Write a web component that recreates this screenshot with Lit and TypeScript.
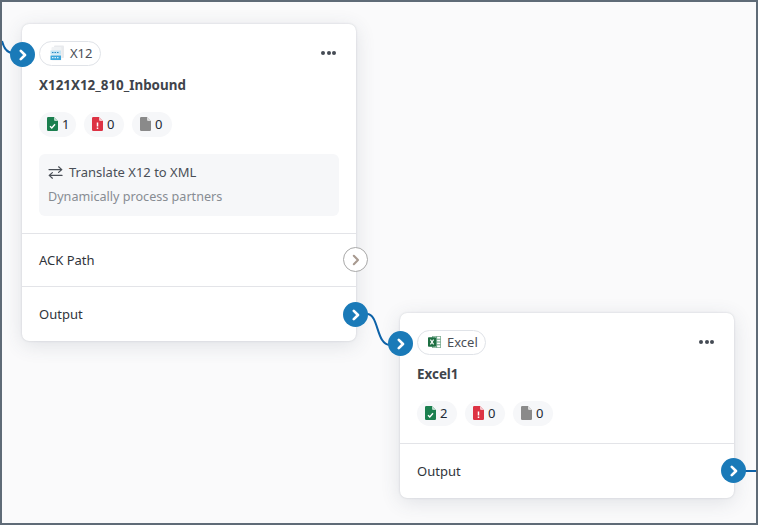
import { LitElement, html, css, svg } from "lit";
import { customElement } from "lit/decorators.js";

const chevron = (color: string, w = 2.6) => svg`<svg class="chev" width="10" height="12" viewBox="0 0 10 12"><path d="M2.8 1.8 7 6 2.8 10.2" fill="none" stroke="${color}" stroke-width="${w}" stroke-linecap="round" stroke-linejoin="round"/></svg>`;

const docIcon = (fill: string, mark: "check" | "bang" | "none") => svg`<svg width="11" height="14" viewBox="0 0 11 14">
  <path d="M1.2 0H7L11 4V12.8A1.2 1.2 0 0 1 9.8 14H1.2A1.2 1.2 0 0 1 0 12.8V1.2A1.2 1.2 0 0 1 1.2 0Z" fill="${fill}"/>
  <path d="M7 0V2.8A1.2 1.2 0 0 0 8.2 4H11Z" fill="#fff" fill-opacity=".7"/>
  ${mark === "check" ? svg`<path d="M3 9.2 4.8 11 8 7.2" fill="none" stroke="#fff" stroke-width="1.4"/>` : ""}
  ${mark === "bang" ? svg`<path d="M5.5 5.4V9.4M5.5 10.4V12" fill="none" stroke="#fff" stroke-width="1.5"/>` : ""}
</svg>`;

const x12Icon = svg`<svg width="14" height="16" viewBox="0 0 14 16">
  <rect x="4" y="0.5" width="10" height="12.5" rx="1" fill="#e8eaed"/>
  <rect x="1.5" y="2" width="10" height="13.5" rx="1" fill="#f0f2f4"/>
  <rect x="0.5" y="5.5" width="10.5" height="4" fill="#c4e4f4"/>
  <rect x="0.5" y="10.5" width="10.5" height="4.5" fill="#3ba6dc"/>
  <path d="M2 7.5h7.5" stroke="#2a8cc4" stroke-width="1" stroke-dasharray="1.5 1"/>
  <path d="M2 12.7h7.5" stroke="#fff" stroke-width="1" stroke-dasharray="1.5 1"/>
</svg>`;

const excelIcon = svg`<svg width="13" height="14" viewBox="0 0 13 14">
  <rect x="4.5" y="1.4" width="8.1" height="11.2" fill="#fff" stroke="#7fae94" stroke-width=".8"/>
  <path d="M8.6 1.4v11.2M4.5 4.2h8.1M4.5 7h8.1M4.5 9.8h8.1" stroke="#5f9c7c" stroke-width="1"/>
  <rect x="0" y="2.2" width="8" height="9.6" rx=".8" fill="#1d6f42"/>
  <path d="M2.4 4.6 5.6 9.4M5.6 4.6 2.4 9.4" stroke="#fff" stroke-width="1.1"/>
</svg>`;

const swapIcon = svg`<svg width="15" height="13" viewBox="0 0 15 13"><path d="M1 3.6H13.6M10.6 .8 13.8 3.6 10.6 6.4M14 9.4H1.4M4.4 6.6 1.2 9.4 4.4 12.2" fill="none" stroke="#4a4f57" stroke-width="1.25" stroke-linecap="round" stroke-linejoin="round"/></svg>`;

@customElement("app-root")
export class AppRoot extends LitElement {
  static styles = css`
    :host {
      display: block;
      width: 758px;
      height: 525px;
      font-family: "Noto Sans", "Open Sans", sans-serif;
    }
    .canvas {
      position: relative;
      box-sizing: border-box;
      width: 758px;
      height: 525px;
      border: 2px solid #5f6b77;
      background: #fafafb;
      overflow: hidden;
    }
    .wires {
      position: absolute;
      left: -2px;
      top: -2px;
    }
    .card {
      position: absolute;
      box-sizing: border-box;
      background: #fff;
      border-radius: 7px;
      box-shadow: 0 0 2px rgba(60, 70, 90, 0.22), 0 4px 20px rgba(60, 70, 90, 0.14);
    }
    .card1 {
      left: 20px;
      top: 22px;
      width: 334px;
      height: 317px;
    }
    .card2 {
      left: 398px;
      top: 311px;
      width: 334px;
      height: 185px;
    }
    .head {
      display: flex;
      align-items: center;
      justify-content: space-between;
      padding: 17px 17px 0 17px;
    }
    .chip {
      display: inline-flex;
      align-items: center;
      gap: 6px;
      box-sizing: border-box;
      height: 25px;
      padding: 0 7px 2px 10px;
      border: 1px solid #e0e3e8;
      border-radius: 13px;
      font-size: 13px;
      color: #4a4f57;
    }
    .dots {
      display: flex;
      gap: 1.5px;
      margin-right: 3px;
      margin-top: -2px;
    }
    .dots i {
      width: 4px;
      height: 4px;
      border-radius: 50%;
      background: #454b54;
    }
    .title {
      padding: 0 17px;
      margin-top: 10px;
      height: 19px;
      line-height: 19px;
      font-size: 13.4px;
      font-weight: 700;
      color: #40444b;
    }
    .pills {
      display: flex;
      gap: 8px;
      padding: 0 17px;
      margin-top: 17px;
    }
    .pill {
      display: inline-flex;
      align-items: center;
      gap: 4px;
      box-sizing: border-box;
      width: 40px;
      height: 25px;
      padding: 0 0 2px 8px;
      border-radius: 13px;
      background: #f6f7f9;
      font-size: 13px;
      color: #232a35;
    }
    .pill.narrow {
      width: 37px;
    }
    .info {
      margin: 17px 17px 0;
      box-sizing: border-box;
      height: 62px;
      padding: 9px 9px 0 9px;
      border-radius: 6px;
      background: #f6f7f9;
    }
    .info-top {
      display: flex;
      align-items: center;
      gap: 6px;
      height: 18px;
      font-size: 13px;
      color: #4a4f57;
    }
    .info-sub {
      margin-top: 7px;
      font-size: 12.6px;
      line-height: 18px;
      color: #878c93;
    }
    .row {
      box-sizing: border-box;
      display: flex;
      align-items: center;
      padding: 0 17px;
      border-top: 1px solid #e3e4e8;
      font-size: 13px;
      color: #2f343b;
    }
    .ack {
      margin-top: 17px;
      height: 53px;
    }
    .out {
      height: 55px;
    }
    .card2 .row {
      margin-top: 17px;
    }
    .port {
      position: absolute;
      box-sizing: border-box;
      width: 25px;
      height: 25px;
      border-radius: 50%;
      background: #1a7ab8;
      display: flex;
      align-items: center;
      justify-content: center;
    }
    .port.empty {
      background: #fff;
      border: 1.5px solid #a8a8a8;
    }
  `;

  private pill(icon: unknown, n: number, narrow = false) {
    return html`<span class="pill ${narrow ? "narrow" : ""}">${icon}${n}</span>`;
  }

  render() {
    return html`<div class="canvas">
      <svg class="wires" width="758" height="525" fill="none" stroke="#0d62a8" stroke-width="2">
        <path d="M2 41C4 49 7 53 13 53" />
        <path d="M367 314C379 314 376 345 390 345" />
        <path d="M745 471H756" />
      </svg>

      <div class="card card1">
        <div class="head">
          <span class="chip">${x12Icon}X12</span>
          <span class="dots"><i></i><i></i><i></i></span>
        </div>
        <div class="title">X121X12_810_Inbound</div>
        <div class="pills">
          ${this.pill(docIcon("#1b7f4f", "check"), 1, true)}
          ${this.pill(docIcon("#dd3344", "bang"), 0)}
          ${this.pill(docIcon("#8a8a8a", "none"), 0)}
        </div>
        <div class="info">
          <div class="info-top">${swapIcon}Translate X12 to XML</div>
          <div class="info-sub">Dynamically process partners</div>
        </div>
        <div class="row ack">ACK Path</div>
        <div class="row out">Output</div>
      </div>

      <div class="card card2">
        <div class="head">
          <span class="chip">${excelIcon}Excel</span>
          <span class="dots"><i></i><i></i><i></i></span>
        </div>
        <div class="title">Excel1</div>
        <div class="pills">
          ${this.pill(docIcon("#1b7f4f", "check"), 2)}
          ${this.pill(docIcon("#dd3344", "bang"), 0)}
          ${this.pill(docIcon("#8a8a8a", "none"), 0)}
        </div>
        <div class="row out">Output</div>
      </div>

      <div class="port" style="left:8px;top:40px">${chevron("#fff")}</div>
      <div class="port empty" style="left:341px;top:245px">${chevron("#a89a90", 2.1)}</div>
      <div class="port" style="left:341px;top:300px">${chevron("#fff")}</div>
      <div class="port" style="left:386px;top:329px">${chevron("#fff")}</div>
      <div class="port" style="left:719px;top:456px">${chevron("#fff")}</div>
    </div>`;
  }
}
